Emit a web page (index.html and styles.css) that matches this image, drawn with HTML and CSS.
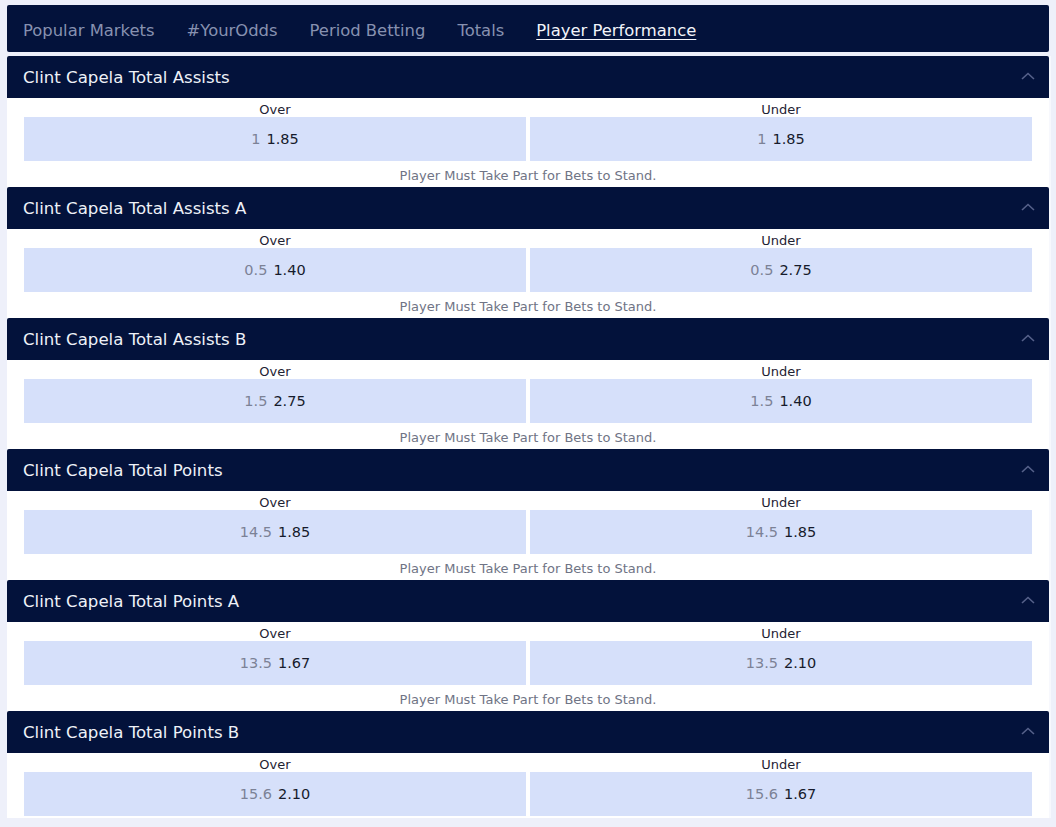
FILE: index.html
```html
<!DOCTYPE html>
<html>
<head>
<meta charset="utf-8">
<link rel="stylesheet" href="styles.css">
</head>
<body>
<div class="page">
  <nav class="tabs">
    <span class="tab">Popular Markets</span>
    <span class="tab">#YourOdds</span>
    <span class="tab">Period Betting</span>
    <span class="tab">Totals</span>
    <span class="tab active">Player Performance</span>
  </nav>

  <div class="markets">
  <section class="market">
    <header class="market-head"><span>Clint Capela Total Assists</span><svg class="chev" viewBox="0 0 14 8" width="14" height="8"><path d="M1 7 L7 1.5 L13 7" fill="none" stroke="currentColor" stroke-width="1.6"/></svg></header>
    <div class="market-body">
      <div class="col"><div class="label">Over</div><div class="odd"><span class="line">1</span><span class="price">1.85</span></div></div>
      <div class="col"><div class="label">Under</div><div class="odd"><span class="line">1</span><span class="price">1.85</span></div></div>
      <div class="note">Player Must Take Part for Bets to Stand.</div>
    </div>
  </section>

  <section class="market">
    <header class="market-head"><span>Clint Capela Total Assists A</span><svg class="chev" viewBox="0 0 14 8" width="14" height="8"><path d="M1 7 L7 1.5 L13 7" fill="none" stroke="currentColor" stroke-width="1.6"/></svg></header>
    <div class="market-body">
      <div class="col"><div class="label">Over</div><div class="odd"><span class="line">0.5</span><span class="price">1.40</span></div></div>
      <div class="col"><div class="label">Under</div><div class="odd"><span class="line">0.5</span><span class="price">2.75</span></div></div>
      <div class="note">Player Must Take Part for Bets to Stand.</div>
    </div>
  </section>

  <section class="market">
    <header class="market-head"><span>Clint Capela Total Assists B</span><svg class="chev" viewBox="0 0 14 8" width="14" height="8"><path d="M1 7 L7 1.5 L13 7" fill="none" stroke="currentColor" stroke-width="1.6"/></svg></header>
    <div class="market-body">
      <div class="col"><div class="label">Over</div><div class="odd"><span class="line">1.5</span><span class="price">2.75</span></div></div>
      <div class="col"><div class="label">Under</div><div class="odd"><span class="line">1.5</span><span class="price">1.40</span></div></div>
      <div class="note">Player Must Take Part for Bets to Stand.</div>
    </div>
  </section>

  <section class="market">
    <header class="market-head"><span>Clint Capela Total Points</span><svg class="chev" viewBox="0 0 14 8" width="14" height="8"><path d="M1 7 L7 1.5 L13 7" fill="none" stroke="currentColor" stroke-width="1.6"/></svg></header>
    <div class="market-body">
      <div class="col"><div class="label">Over</div><div class="odd"><span class="line">14.5</span><span class="price">1.85</span></div></div>
      <div class="col"><div class="label">Under</div><div class="odd"><span class="line">14.5</span><span class="price">1.85</span></div></div>
      <div class="note">Player Must Take Part for Bets to Stand.</div>
    </div>
  </section>

  <section class="market">
    <header class="market-head"><span>Clint Capela Total Points A</span><svg class="chev" viewBox="0 0 14 8" width="14" height="8"><path d="M1 7 L7 1.5 L13 7" fill="none" stroke="currentColor" stroke-width="1.6"/></svg></header>
    <div class="market-body">
      <div class="col"><div class="label">Over</div><div class="odd"><span class="line">13.5</span><span class="price">1.67</span></div></div>
      <div class="col"><div class="label">Under</div><div class="odd"><span class="line">13.5</span><span class="price">2.10</span></div></div>
      <div class="note">Player Must Take Part for Bets to Stand.</div>
    </div>
  </section>

  <section class="market">
    <header class="market-head"><span>Clint Capela Total Points B</span><svg class="chev" viewBox="0 0 14 8" width="14" height="8"><path d="M1 7 L7 1.5 L13 7" fill="none" stroke="currentColor" stroke-width="1.6"/></svg></header>
    <div class="market-body">
      <div class="col"><div class="label">Over</div><div class="odd"><span class="line">15.6</span><span class="price">2.10</span></div></div>
      <div class="col"><div class="label">Under</div><div class="odd"><span class="line">15.6</span><span class="price">1.67</span></div></div>
    </div>
  </section>
  </div>
</div>
</body>
</html>
```

FILE: styles.css
```css
html, body {
  margin: 0;
  padding: 0;
}
body {
  background: #eef0fa;
  font-family: "DejaVu Sans", Verdana, sans-serif;
  overflow: hidden;
}
.page {
  width: 1042px;
  margin-left: 7px;
  padding-top: 5px;
  display: flex;
  flex-direction: column;
  gap: 4px;
}
.tabs {
  height: 47px;
  box-sizing: border-box;
  padding: 4px 16px 0 16px;
  background: #03123b;
  border-radius: 2px;
  display: flex;
  align-items: center;
  gap: 32px;
  font-size: 16.4px;
  color: #8791b0;
}
.tab.active {
  color: #f2f4fa;
  text-decoration: underline;
  text-underline-offset: 3px;
}
.markets {
  display: flex;
  flex-direction: column;
}
.market {
  background: #ffffff;
  box-shadow: 2px 0 0 #f7f8fd;
}
.market-head {
  height: 42px;
  background: #03123b;
  border-radius: 2px 2px 0 0;
  display: flex;
  align-items: center;
  justify-content: space-between;
  padding: 0 14px 0 16px;
  color: #eef1f8;
  font-size: 16.6px;
}
.chev {
  color: #56618a;
  margin-top: -2px;
}
.market-body {
  display: grid;
  grid-template-columns: 1fr 1fr;
  column-gap: 4px;
  padding: 3px 17px 2px 17px;
}
.col {
  display: flex;
  flex-direction: column;
}
.label {
  height: 16px;
  line-height: 18px;
  text-align: center;
  font-size: 13px;
  color: #1e2233;
}
.odd {
  height: 44px;
  background: #d6e0fa;
  display: flex;
  align-items: center;
  justify-content: center;
  gap: 6px;
  font-size: 14.5px;
}
.line {
  color: #7c8296;
}
.price {
  color: #161b2c;
}
.note {
  grid-column: 1 / 3;
  margin-top: 4px;
  height: 20px;
  line-height: 22px;
  text-align: center;
  font-size: 13px;
  color: #6f7485;
}
```
